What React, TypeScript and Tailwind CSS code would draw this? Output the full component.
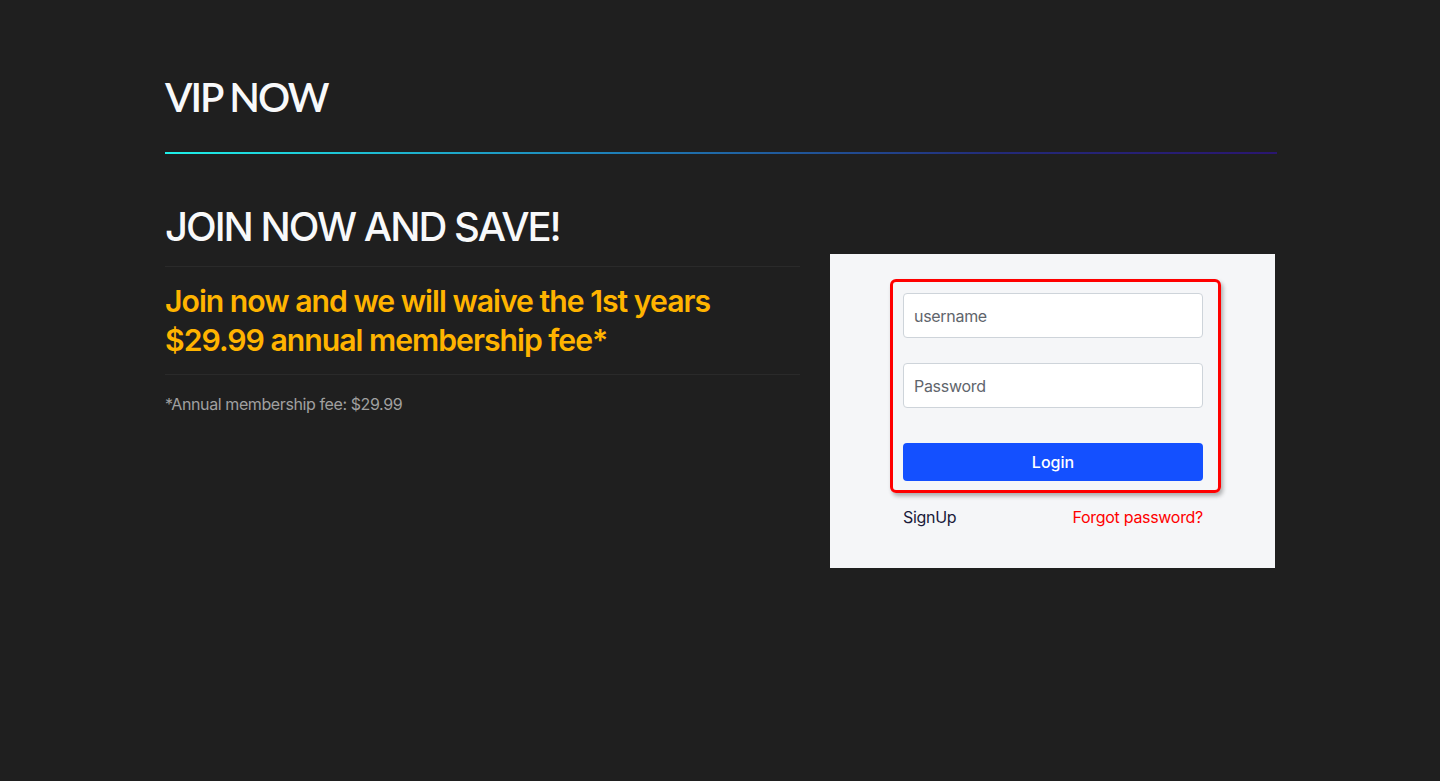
import React from "react";

export default function App() {
  return (
    <div className="min-h-screen w-full bg-[#1f1f1f] font-['Inter',sans-serif]">
      <div className="mx-auto w-[1110px] pt-[73px]">
        <h1 className="font-['Lato',sans-serif] text-[40px] leading-[48px] font-semibold tracking-[-2px] text-[#f8f9fa]">
          VIP NOW
        </h1>
        <div className="mt-[31px] h-[2px] w-[1112px] bg-[linear-gradient(90deg,#1ef0e8_0%,#1e80b8_40%,#232a78_75%,#2a1670_100%)]" />
        <h2 className="mt-[49px] text-[40px] leading-[48px] font-medium tracking-[-2px] text-[#f8f9fa]">
          JOIN NOW AND SAVE!
        </h2>
        <div className="flex items-start justify-between">
          <div className="w-[635px] mt-[15px]">
            <div className="border-y border-[#2a2a2a] pt-[15px] pb-[14px]">
              <p className="text-[30.2px] leading-[39px] font-semibold tracking-[-1px] text-[#ffb400]">
                Join now and we will waive the 1st years
                <br />
                $29.99 annual membership fee*
              </p>
            </div>
            <p className="mt-[17px] text-[16px] leading-[24px] tracking-[-0.4px] text-[#a0a0a0]">
              *Annual membership fee: $29.99
            </p>
          </div>
          <div className="mt-[3px] h-[314px] w-[445px] bg-[#f5f6f8] pl-[60px] pt-[25px]">
            <div className="w-[331px] rounded-[6px] border-[3px] border-[#ff0000] pl-[10px] pr-[15px] pt-[11px] pb-[9px] shadow-[2px_3px_4px_rgba(0,0,0,0.3)]">
              <input
                placeholder="username"
                className="block h-[45px] w-[300px] rounded-[4px] border border-[#ced4da] bg-white px-[10px] text-[16px] tracking-[-0.3px] text-[#495057] placeholder:text-[#5f656c] outline-none"
              />
              <input
                placeholder="Password"
                type="password"
                className="mt-[25px] block h-[45px] w-[300px] rounded-[4px] border border-[#ced4da] bg-white px-[10px] text-[16px] tracking-[-0.3px] text-[#495057] placeholder:text-[#5f656c] outline-none"
              />
              <button className="mt-[35px] flex h-[38px] w-[300px] items-center justify-center rounded-[4px] bg-[#1450ff] text-[16px] font-medium text-white">
                Login
              </button>
            </div>
            <div className="mt-[12px] flex w-[300px] ml-[13px] justify-between text-[16px] leading-[24px] tracking-[-0.3px]">
              <span className="text-[#1a1a3a]">SignUp</span>
              <span className="text-[#ff0000]">Forgot password?</span>
            </div>
          </div>
        </div>
      </div>
    </div>
  );
}
